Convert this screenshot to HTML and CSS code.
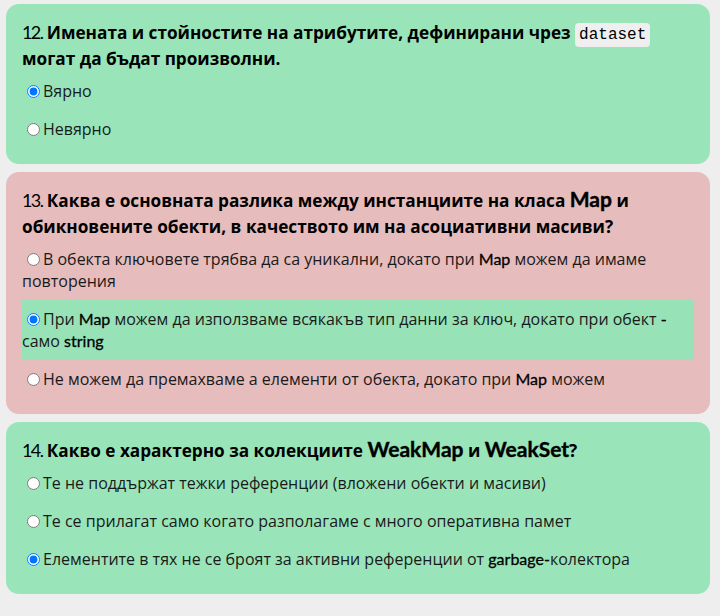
FILE: index.html
```html
<!DOCTYPE html>
<html lang="bg">
<head>
<meta charset="utf-8">
<title>Тест</title>
<link rel="stylesheet" href="styles.css">
</head>
<body>
<main class="quiz">
  <section class="card correct">
    <h2 class="question"><span class="num">12.</span> Имената и стойностите на атрибутите, дефинирани чрез <code>dataset</code> могат да бъдат произволни.</h2>
    <label class="option"><input type="radio" name="q12" checked>Вярно</label>
    <label class="option"><input type="radio" name="q12">Невярно</label>
  </section>

  <section class="card wrong">
    <h2 class="question"><span class="num">13.</span> Каква е основната разлика между инстанциите на класа <span class="lat">Map</span> и обикновените обекти, в качеството им на асоциативни масиви?</h2>
    <label class="option"><input type="radio" name="q13">В обекта ключовете трябва да са уникални, докато при <span class="lat">Map</span> можем да имаме повторения</label>
    <label class="option right"><input type="radio" name="q13" checked>При <span class="lat">Map</span> можем да използваме всякакъв тип данни за ключ, докато при обект <span class="lat">-</span> само <span class="lat">string</span></label>
    <label class="option"><input type="radio" name="q13">Не можем да премахваме а елементи от обекта, докато при <span class="lat">Map</span> можем</label>
  </section>

  <section class="card correct">
    <h2 class="question"><span class="num">14.</span> Какво е характерно за колекциите <span class="lat">WeakMap</span> и <span class="lat">WeakSet</span>?</h2>
    <label class="option"><input type="radio" name="q14">Те не поддържат тежки референции (вложени обекти и масиви)</label>
    <label class="option"><input type="radio" name="q14">Те се прилагат само когато разполагаме с много оперативна памет</label>
    <label class="option"><input type="radio" name="q14" checked>Елементите в тях не се броят за активни референции от <span class="lat">garbage-</span>колектора</label>
  </section>
</main>
</body>
</html>
```

FILE: styles.css
```css
html, body {
  margin: 0;
  padding: 0;
  background: #eeeeee;
}

body {
  font-family: "Open Sans", "Noto Sans", sans-serif;
  color: #1a1a1a;
}

.quiz {
  display: flex;
  flex-direction: column;
  gap: 8px;
  padding: 4px 10px 0 6px;
}

.card {
  border-radius: 13px;
  padding: 16px;
}

.card.correct {
  background: #99e5b9;
}

.card.wrong {
  background: #e7bcbd;
}

.question {
  margin: 0;
  font-size: 17.2px;
  line-height: 26px;
  font-weight: 700;
  color: #000;
}

.question .num {
  font-family: "Lato", "Liberation Sans", sans-serif;
  font-weight: 400;
  font-size: 18px;
  letter-spacing: -1.6px;
  line-height: 1;
}

.lat {
  font-family: "Lato", "Liberation Sans", sans-serif;
  font-weight: 400;
  font-size: 16px;
  color: #000;
  line-height: 1;
  -webkit-text-stroke: 0.3px #000;
}

.question .lat {
  font-size: 21px;
  font-weight: 700;
  -webkit-text-stroke: 0.4px #000;
}

code {
  font-family: "Liberation Mono", monospace;
  font-weight: 400;
  font-size: 16px;
  line-height: 1;
  background: #efefef;
  border-radius: 4px;
  padding: 3px 4px;
}

.option {
  display: block;
  padding: 8px 0;
  font-size: 16px;
  line-height: 22px;
}

.option.right {
  background: #97e3b7;
}

.option input {
  margin: 3px 3px 0 5px;
  vertical-align: -1px;
}
```
